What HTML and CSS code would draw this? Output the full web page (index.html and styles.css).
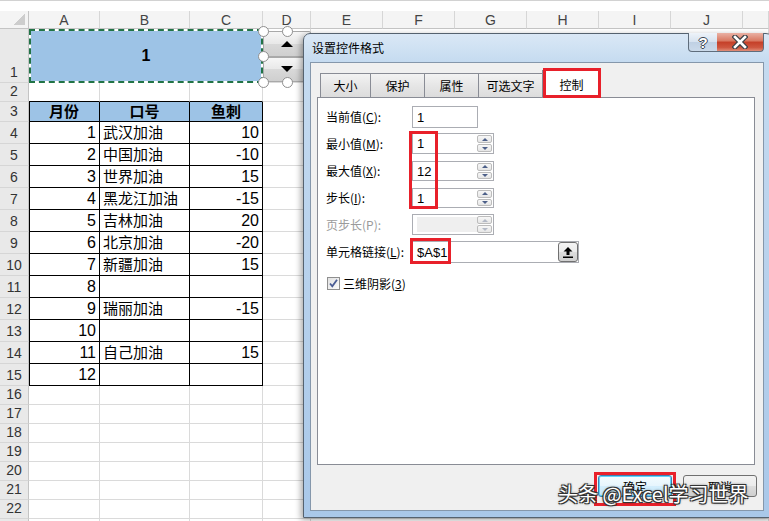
FILE: index.html
```html
<!DOCTYPE html>
<html lang="zh-CN">
<head>
  <meta charset="UTF-8" />
  <title>设置控件格式</title>
  <link rel="stylesheet" href="styles.css">
</head>
<body>
  <div class="topbar"></div>

  <div class="sheet">
    <div class="corner"></div>
    <div class="ch">A</div><div class="ch">B</div><div class="ch">C</div><div class="ch">D</div>
    <div class="ch">E</div><div class="ch">F</div><div class="ch">G</div><div class="ch">H</div>
    <div class="ch">I</div><div class="ch">J</div><div class="ch"></div>

    <div class="rh">1</div><div class="merged">1</div><div class="c"></div><div class="c fill"></div>
    <div class="rh">2</div><div class="c edge"></div><div class="c edge"></div><div class="c edge"></div><div class="c"></div><div class="c fill"></div>
    <div class="rh">3</div><div class="c t a th">月份</div><div class="c t th">口号</div><div class="c t th">鱼刺</div><div class="c"></div><div class="c fill"></div>
    <div class="rh">4</div><div class="c t a">1</div><div class="c t">武汉加油</div><div class="c t n">10</div><div class="c"></div><div class="c fill"></div>
    <div class="rh">5</div><div class="c t a">2</div><div class="c t">中国加油</div><div class="c t n">-10</div><div class="c"></div><div class="c fill"></div>
    <div class="rh">6</div><div class="c t a">3</div><div class="c t">世界加油</div><div class="c t n">15</div><div class="c"></div><div class="c fill"></div>
    <div class="rh">7</div><div class="c t a">4</div><div class="c t">黑龙江加油</div><div class="c t n">-15</div><div class="c"></div><div class="c fill"></div>
    <div class="rh">8</div><div class="c t a">5</div><div class="c t">吉林加油</div><div class="c t n">20</div><div class="c"></div><div class="c fill"></div>
    <div class="rh">9</div><div class="c t a">6</div><div class="c t">北京加油</div><div class="c t n">-20</div><div class="c"></div><div class="c fill"></div>
    <div class="rh">10</div><div class="c t a">7</div><div class="c t">新疆加油</div><div class="c t n">15</div><div class="c"></div><div class="c fill"></div>
    <div class="rh">11</div><div class="c t a">8</div><div class="c t"></div><div class="c t n"></div><div class="c"></div><div class="c fill"></div>
    <div class="rh">12</div><div class="c t a">9</div><div class="c t">瑞丽加油</div><div class="c t n">-15</div><div class="c"></div><div class="c fill"></div>
    <div class="rh">13</div><div class="c t a">10</div><div class="c t"></div><div class="c t n"></div><div class="c"></div><div class="c fill"></div>
    <div class="rh">14</div><div class="c t a">11</div><div class="c t">自己加油</div><div class="c t n">15</div><div class="c"></div><div class="c fill"></div>
    <div class="rh">15</div><div class="c t a">12</div><div class="c t"></div><div class="c t n"></div><div class="c"></div><div class="c fill"></div>
    <div class="rh">16</div><div class="c"></div><div class="c"></div><div class="c"></div><div class="c"></div><div class="c fill"></div>
    <div class="rh">17</div><div class="c"></div><div class="c"></div><div class="c"></div><div class="c"></div><div class="c fill"></div>
    <div class="rh">18</div><div class="c"></div><div class="c"></div><div class="c"></div><div class="c"></div><div class="c fill"></div>
    <div class="rh">19</div><div class="c"></div><div class="c"></div><div class="c"></div><div class="c"></div><div class="c fill"></div>
    <div class="rh">20</div><div class="c"></div><div class="c"></div><div class="c"></div><div class="c"></div><div class="c fill"></div>
    <div class="rh">21</div><div class="c"></div><div class="c"></div><div class="c"></div><div class="c"></div><div class="c fill"></div>
    <div class="rh">22</div><div class="c"></div><div class="c"></div><div class="c"></div><div class="c"></div><div class="c fill"></div>
    <div class="rh"></div><div class="c"></div><div class="c"></div><div class="c"></div><div class="c"></div><div class="c fill"></div>
  </div>

  <!-- spin button form control sitting on the sheet -->
  <div class="sheet-spin">
    <div class="sbtn"><span class="tri-up"></span></div>
    <div class="sbtn"><span class="tri-dn"></span></div>
  </div>
  <span class="hdl h1"></span>
  <span class="hdl h2"></span>
  <span class="hdl h3"></span>
  <span class="hdl h4"></span>
  <span class="hdl h5"></span>

  <!-- Format Control dialog -->
  <div class="dlg">
    <div class="cap">设置控件格式</div>
    <div class="capbtn help">?</div>
    <div class="capbtn close">
      <svg width="16" height="14" viewBox="0 0 16 14">
        <path d="M3 2 L13 12 M13 2 L3 12" stroke="#3b3f45" stroke-width="5" stroke-linecap="square"/>
        <path d="M3 2 L13 12 M13 2 L3 12" stroke="#fff" stroke-width="2.6" stroke-linecap="square"/>
      </svg>
    </div>

    <div class="client">
      <div class="tabctl">
        <div class="tabs">
          <div class="tab w1">大小</div>
          <div class="tab w2">保护</div>
          <div class="tab w3">属性</div>
          <div class="tab w4">可选文字</div>
          <div class="tab w5 on">控制</div>
        </div>
        <div class="panel">
          <div class="frow r1">
            <span class="lbl">当前值(<u>C</u>):</span>
            <div class="tbox w66">1</div>
          </div>
          <div class="frow r2">
            <span class="lbl">最小值(<u>M</u>):</span>
            <div class="tbox w82">1<div class="spn"><i class="up"></i><i class="dn"></i></div></div>
          </div>
          <div class="frow r3">
            <span class="lbl">最大值(<u>X</u>):</span>
            <div class="tbox w82">12<div class="spn"><i class="up"></i><i class="dn"></i></div></div>
          </div>
          <div class="frow r4">
            <span class="lbl">步长(<u>I</u>):</span>
            <div class="tbox w82">1<div class="spn"><i class="up"></i><i class="dn"></i></div></div>
          </div>
          <div class="frow r5">
            <span class="lbl dis">页步长(P):</span>
            <div class="tbox w82 dis"><span class="grey"></span><div class="spn off"><i class="up"></i><i class="dn"></i></div></div>
          </div>
          <div class="frow r6">
            <span class="lbl">单元格链接(<u>L</u>):</span>
            <div class="tbox w167">$A$1
              <div class="pick">
                <svg width="12" height="12" viewBox="0 0 12 12">
                  <path d="M6 1 L10.5 5.5 H7.5 V9 H4.5 V5.5 H1.5 Z" fill="#000"/>
                  <rect x="1" y="10.5" width="10" height="1.5" fill="#000"/>
                </svg>
              </div>
            </div>
          </div>
          <div class="frow r7">
            <span class="chk">
              <svg width="11" height="11" viewBox="0 0 11 11">
                <path d="M2 5.5 L4.3 8.3 L9 1.8" fill="none" stroke="#4a5c94" stroke-width="1.8"/>
              </svg>
            </span>
            <span class="clbl">三维阴影(<u>3</u>)</span>
          </div>
        </div>
      </div>
      <div class="btns">
        <button class="btn ok">确定</button>
        <button class="btn">取消</button>
      </div>
    </div>
  </div>

  <!-- red annotation boxes -->
  <div class="mark m-tab"></div>
  <div class="mark m-vals"></div>
  <div class="mark m-link"></div>
  <div class="mark m-ok"></div>

  <div class="wm">头条 @Excel学习世界</div>
</body>
</html>
```

FILE: styles.css
```css
* {
  box-sizing: border-box;
}

body {
  margin: 0;
  width: 769px;
  height: 521px;
  overflow: hidden;
  position: relative;
  background: #fff;
  font-family: "Liberation Sans", "Noto Sans CJK SC", sans-serif;
}

/* Sheet */
.topbar {
  height: 11px;
  border-top: 1px solid #d2d2d2;
  background: #fff;
}

.sheet {
  display: grid;
  grid-template-columns: 29px 71px 90px 73px 48px repeat(6, 72px) 1fr;
  grid-template-rows: 18px 54px 19px 20px repeat(12, 22px) repeat(8, 19px);
}

.corner {
  position: relative;
  background: #f4f4f4;
  border-right: 1px solid #c4c4c4;
  border-bottom: 1px solid #c4c4c4;
}
.corner::after {
  content: "";
  position: absolute;
  right: 3px;
  bottom: 3px;
  width: 11px;
  height: 11px;
  background: linear-gradient(135deg, transparent 50%, #cdcdcd 50%);
}

.ch {
  background: #f4f4f4;
  border-right: 1px solid #d6d6d6;
  border-bottom: 1px solid #c4c4c4;
  color: #444;
  font-size: 14px;
  line-height: 18px;
  text-align: center;
}

.rh {
  display: flex;
  align-items: flex-end;
  justify-content: center;
  padding-bottom: 2px;
  background: #e9e9e9;
  border-right: 1px solid #c4c4c4;
  border-bottom: 1px solid #d6d6d6;
  color: #333;
  font-size: 14px;
  line-height: 16px;
}

.c {
  border-right: 1px solid #dadada;
  border-bottom: 1px solid #dadada;
}
.c.fill {
  grid-column: 6 / -1;
}
.c.edge {
  border-bottom-color: #000;
}

.t {
  display: flex;
  align-items: center;
  padding: 1px 3px 0 3px;
  border-color: #000;
  color: #000;
  font-size: 15px;
  line-height: 20px;
}
.t.a,
.t.n {
  justify-content: flex-end;
  font-size: 16px;
}
.t.a {
  box-shadow: inset 1px 0 0 #000;
}
.t.th {
  justify-content: center;
  background: #9dc3e6;
  font-size: 15px;
  font-weight: bold;
}

.merged {
  grid-column: 2 / 5;
  display: flex;
  align-items: center;
  justify-content: center;
  border: 2px dashed #217346;
  background: #9dc3e6;
  background-clip: padding-box;
  font-size: 16px;
  font-weight: bold;
}

/* spin button control on the sheet */
.sheet-spin {
  position: absolute;
  left: 263px;
  top: 31px;
  width: 48px;
  height: 51px;
  display: flex;
  flex-direction: column;
}
.sbtn {
  flex: 1;
  display: flex;
  align-items: center;
  justify-content: center;
  border: 1px solid #a9a9a9;
  border-radius: 2px;
  background: linear-gradient(#f6f6f6, #e8e8e8 50%, #d9d9d9 50%, #cfcfcf);
}
.tri-up,
.tri-dn {
  width: 0;
  height: 0;
  border-left: 6px solid transparent;
  border-right: 6px solid transparent;
}
.tri-up {
  border-bottom: 6px solid #000;
}
.tri-dn {
  border-top: 6px solid #000;
}

.hdl {
  position: absolute;
  width: 11px;
  height: 11px;
  border: 1.5px solid #8f8f8f;
  border-radius: 50%;
  background: #fff;
}
.h1 { left: 258px; top: 26px; }
.h2 { left: 282px; top: 26px; }
.h3 { left: 258px; top: 51px; }
.h4 { left: 258px; top: 77px; }
.h5 { left: 282px; top: 77px; }

/* Dialog */
.dlg {
  position: absolute;
  left: 303px;
  top: 33px;
  width: 470px;
  height: 485px;
  display: flex;
  flex-direction: column;
  padding: 0 8px 6px 6px;
  border: 1px solid #55626f;
  border-radius: 7px 7px 0 0;
  background: linear-gradient(180deg, #dae8f6 0, #c5dbf0 28px, #bad3ed 200px, #a9c8e9 100%);
  box-shadow: -2px 2px 6px rgba(0, 0, 0, 0.35);
  font-family: "Noto Sans CJK SC", sans-serif;
}

.cap {
  height: 28px;
  padding-left: 2px;
  font-size: 12px;
  line-height: 27px;
  color: #000;
}

.capbtn {
  position: absolute;
  top: -1px;
  height: 19px;
  display: flex;
  align-items: center;
  justify-content: center;
  border: 1px solid #5f6d7c;
  border-top: none;
}
.help {
  left: 384px;
  width: 30px;
  border-radius: 0 0 0 4px;
  background: linear-gradient(#eef3f9, #d6e2ef 50%, #bfd0e3 50%, #cbdaea);
  color: #fff;
  font-family: "Liberation Sans", sans-serif;
  font-size: 15px;
  font-weight: bold;
  text-shadow: 1px 0 0 #3d4752, -1px 0 0 #3d4752, 0 1px 0 #3d4752, 0 -1px 0 #3d4752;
}
.close {
  left: 413px;
  width: 47px;
  border-left: none;
  border-radius: 0 0 4px 0;
  background: linear-gradient(#eab1a4, #d8765f 45%, #c53f28 50%, #ce563f 80%, #e08d78);
}

.client {
  flex: 1;
  border: 1px solid #8597ab;
  background: #f0f0f0;
}

.tabctl {
  width: 438px;
  margin: 5px 0 0 6px;
}

.tabs {
  display: flex;
  align-items: flex-end;
  height: 29px;
  padding-left: 3px;
}
.tab {
  height: 24px;
  margin-right: -1px;
  border: 1px solid #898c95;
  border-bottom: none;
  background: linear-gradient(#f3f3f3, #e6e6e6 50%, #dcdcdc);
  font-size: 12px;
  line-height: 23px;
  text-align: center;
  color: #000;
}
.tab.on {
  position: relative;
  z-index: 1;
  height: 28px;
  margin-bottom: -1px;
  background: #fff;
  line-height: 27px;
}
.w1 { width: 51px; }
.w2 { width: 55px; }
.w3 { width: 55px; }
.w4 { width: 65px; }
.w5 { width: 59px; }

.panel {
  height: 368px;
  padding: 8px 0 0 8px;
  border: 1px solid #898c95;
  background: #fff;
}

.frow {
  display: flex;
  align-items: center;
}
.r1 { height: 22px; }
.r2 { height: 21px; margin-top: 5px; }
.r3 { height: 20px; margin-top: 7px; }
.r4 { height: 20px; margin-top: 7px; }
.r5 { height: 21px; margin-top: 6px; }
.r6 { height: 22px; margin-top: 6px; }
.r7 { height: 13px; margin-top: 14px; }

.lbl {
  width: 86px;
  font-size: 12px;
  line-height: 16px;
  color: #000;
}
.lbl.dis {
  color: #9b9b9b;
}

.tbox {
  position: relative;
  height: 100%;
  display: flex;
  align-items: center;
  padding-left: 4px;
  border: 1px solid #abadb3;
  background: #fff;
  font-family: "Liberation Sans", sans-serif;
  font-size: 13px;
  color: #000;
}
.w66 { width: 66px; }
.w82 { width: 82px; }
.w167 { width: 167px; }

.tbox .grey {
  width: 61px;
  height: 15px;
  background: #efefef;
}

.spn {
  position: absolute;
  top: 0;
  right: 0;
  bottom: 0;
  width: 17px;
  display: flex;
  flex-direction: column;
  gap: 1px;
  padding: 1px;
}
.spn i {
  flex: 1;
  display: flex;
  align-items: center;
  justify-content: center;
  border: 1px solid #bcbcbc;
  border-radius: 2px;
  background: linear-gradient(#f7f7f7, #e6e6e6);
}
.spn i::after {
  content: "";
  border-left: 3px solid transparent;
  border-right: 3px solid transparent;
}
.spn .up::after {
  border-bottom: 3px solid #4d6089;
}
.spn .dn::after {
  border-top: 3px solid #4d6089;
}
.spn.off .up::after {
  border-bottom-color: #b3b9c6;
}
.spn.off .dn::after {
  border-top-color: #b3b9c6;
}

.pick {
  position: absolute;
  top: 0;
  right: 0;
  width: 20px;
  height: 20px;
  display: flex;
  align-items: center;
  justify-content: center;
  border: 1px solid #707070;
  border-radius: 3px;
  background: linear-gradient(#f4f4f4, #ebebeb 50%, #dddddd 50%, #d0d0d0);
}

.chk {
  width: 13px;
  height: 13px;
  margin-left: 1px;
  display: flex;
  align-items: center;
  justify-content: center;
  border: 1px solid #8f8f8f;
  background: linear-gradient(135deg, #e2e2e2, #fbfbfb);
}
.clbl {
  margin-left: 3px;
  font-size: 12px;
  line-height: 16px;
  color: #000;
}

.btns {
  display: flex;
  justify-content: flex-end;
  gap: 11px;
  margin-top: 10px;
  padding-right: 6px;
}
.btn {
  width: 74px;
  height: 22px;
  padding: 0;
  border: 1px solid #707070;
  border-radius: 3px;
  background: linear-gradient(#f2f2f2, #ebebeb 50%, #dddddd 50%, #cfcfcf);
  font-family: "Noto Sans CJK SC", sans-serif;
  font-size: 12px;
  color: #000;
}
.btn.ok {
  border-color: #3c7fb1;
  box-shadow: inset 0 0 0 1px #5fd3fb;
  background: linear-gradient(#f4fbfe, #e6f5fd 50%, #d4eefc 50%, #c6e7fa);
}

/* annotations */
.mark {
  position: absolute;
  border: 3px solid #e8202a;
}
.m-tab { left: 543px; top: 68px; width: 58px; height: 30px; z-index: 2; }
.m-vals { left: 409px; top: 131px; width: 29px; height: 78px; }
.m-link { left: 410px; top: 238px; width: 41px; height: 26px; }
.m-ok { left: 594px; top: 472px; width: 82px; height: 34px; }

.wm {
  position: absolute;
  left: 558px;
  top: 480px;
  font-family: "Noto Sans CJK SC", sans-serif;
  font-size: 20px;
  line-height: 28px;
  color: #fff;
  white-space: nowrap;
  text-shadow: 1px 1px 0 #333, -1px -1px 0 #333, 1px -1px 0 #333, -1px 1px 0 #333, 0 0 3px #000;
}
```
